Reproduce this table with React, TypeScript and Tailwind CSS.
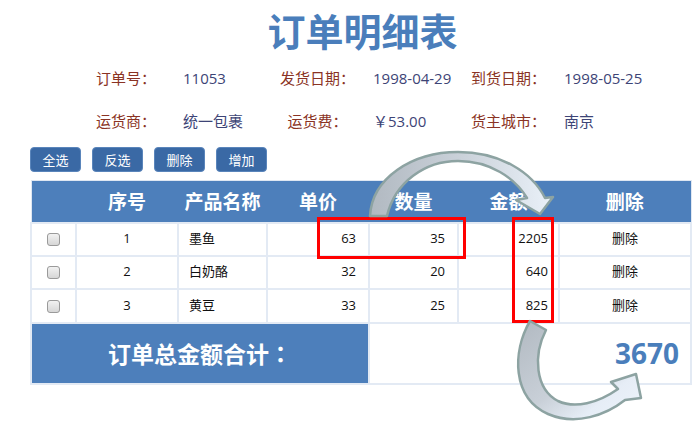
import React from "react";

const rows = [
  { id: 1, name: "墨鱼", price: 63, qty: 35, amount: 2205 },
  { id: 2, name: "白奶酪", price: 32, qty: 20, amount: 640 },
  { id: 3, name: "黄豆", price: 33, qty: 25, amount: 825 },
];

function Check() {
  return (
    <span className="inline-block w-[13px] h-[13px] rounded-[3px] border border-[#9a9a9a] bg-gradient-to-b from-[#f2f2f2] to-[#d6d6d6] align-middle" />
  );
}

export default function App() {
  const label = "text-[#8a3324]";
  const value = "text-[#3d4476]";
  return (
    <div className="relative w-[700px] h-[433px] bg-white overflow-hidden font-['Open_Sans','Noto_Sans_CJK_SC',sans-serif]">
      <div className="h-[57px] pt-[10px] pl-[25px] text-center">
        <h1 className="text-[38px] leading-[40px] font-bold text-[#4a7ebb] font-['Noto_Sans_CJK_SC',sans-serif]">
          订单明细表
        </h1>
      </div>

      <div className="ml-[96px] text-[15px]">
        <div className="grid grid-cols-[87px_97px_75px_116px_93px_auto] h-[43px] items-center">
          <span className={label}>订单号：</span>
          <span className={value}>11053</span>
          <span className={`${label} text-center`}>发货日期：</span>
          <span className={`${value} pl-[18px]`}>1998-04-29</span>
          <span className={label}>到货日期：</span>
          <span className={value}>1998-05-25</span>
        </div>
        <div className="grid grid-cols-[87px_97px_75px_116px_93px_auto] h-[43px] items-center">
          <span className={label}>运货商：</span>
          <span className={value}>统一包裹</span>
          <span className={`${label} text-center`}>运货费：</span>
          <span className={`${value} pl-[18px]`}>￥53.00</span>
          <span className={label}>货主城市：</span>
          <span className={value}>南京</span>
        </div>
      </div>

      <div className="mt-[4px] ml-[30px] flex gap-[11px]">
        {["全选", "反选", "删除", "增加"].map((t) => (
          <button
            key={t}
            className="w-[51px] h-[25px] rounded-[4px] bg-[#3a69a5] border border-[#5a85bb] text-white text-[13px] leading-[23px] font-['Noto_Sans_CJK_SC',sans-serif]"
          >
            {t}
          </button>
        ))}
      </div>

      <table className="mt-[8px] ml-[30px] w-[660px] table-fixed border-collapse border border-[#dfe7f2] text-[13px] text-[#111]">
        <colgroup>
          <col className="w-[45px]" />
          <col className="w-[102px]" />
          <col className="w-[89px]" />
          <col className="w-[102px]" />
          <col className="w-[89px]" />
          <col className="w-[101px]" />
          <col className="w-[132px]" />
        </colgroup>
        <thead>
          <tr className="h-[42px] bg-[#4d7fbb] text-white text-[19px] font-bold font-['Noto_Sans_CJK_SC',sans-serif]">
            <th></th>
            <th className="text-center">序号</th>
            <th className="text-center">产品名称</th>
            <th className="text-center">单价</th>
            <th className="text-center">数量</th>
            <th className="text-center">金额</th>
            <th className="text-center">删除</th>
          </tr>
        </thead>
        <tbody>
          {rows.map((r, i) => (
            <tr key={r.id} className={i === 2 ? "h-[34px]" : "h-[33px]"}>
              <td className="border-2 border-[#e3eaf4] text-center">
                <Check />
              </td>
              <td className="border-2 border-[#e3eaf4] text-center">{r.id}</td>
              <td className="border-2 border-[#e3eaf4] pl-[10px]">{r.name}</td>
              <td className="border-2 border-[#e3eaf4] text-right pr-[12px]">{r.price}</td>
              <td className="border-2 border-[#e3eaf4] text-right pr-[12px]">{r.qty}</td>
              <td className="border-2 border-[#e3eaf4] text-right pr-[10px]">{r.amount}</td>
              <td className="border-2 border-[#e3eaf4] text-center">删除</td>
            </tr>
          ))}
          <tr className="h-[61px]">
            <td
              colSpan={4}
              className="bg-[#4d7fbb] text-center text-white text-[23px] font-bold font-['Noto_Sans_CJK_SC',sans-serif] border-2 border-[#e3eaf4]"
            >
              订单总金额合计<span className="font-['Noto_Sans_CJK_JP',sans-serif]">：</span>
            </td>
            <td
              colSpan={3}
              className="text-right pr-[11px] text-[28px] font-bold text-[#4a7ebb] border-2 border-[#e3eaf4]"
            >
              3670
            </td>
          </tr>
        </tbody>
      </table>

      <svg
        className="absolute left-0 top-0 pointer-events-none"
        width="700"
        height="433"
        viewBox="0 0 700 433"
      >
        <defs>
          <linearGradient id="g1" x1="0" y1="0" x2="1" y2="0">
            <stop offset="0" stopColor="#b1b9c1" />
            <stop offset="0.55" stopColor="#cdd4dc" />
            <stop offset="1" stopColor="#eaf1f9" />
          </linearGradient>
          <linearGradient id="g2" x1="0" y1="0" x2="1" y2="1">
            <stop offset="0" stopColor="#b1b9c1" />
            <stop offset="0.5" stopColor="#c9d0d8" />
            <stop offset="0.75" stopColor="#e6edf6" />
            <stop offset="1" stopColor="#eef4fb" />
          </linearGradient>
        </defs>
        <rect x="318.5" y="218.5" width="146" height="39" fill="none" stroke="#ff0000" strokeWidth="3" />
        <rect x="513.5" y="218.5" width="39" height="103" fill="none" stroke="#ff0000" strokeWidth="3" />
        <path
          d="M 370 216 C 372 178, 412 152, 458 152 C 500 152, 532 172, 545 198 L 553 197 L 540 214 L 516 200 L 527 198 C 515 178, 490 161, 458 161 C 425 161, 395 182, 387 216 Z"
          fill="url(#g1)"
          stroke="#8da3a2"
          strokeWidth="2.5"
          strokeLinejoin="round"
        />
        <path
          d="M 530 321 C 512 352, 512 398, 548 414 C 576 426, 606 415, 625 400 L 641 398 L 636 374 L 611 382 L 618 389 C 598 403, 575 409, 558 401 C 535 389, 533 355, 546 330 Z"
          fill="url(#g2)"
          stroke="#8da3a2"
          strokeWidth="2.5"
          strokeLinejoin="round"
        />
      </svg>
    </div>
  );
}
